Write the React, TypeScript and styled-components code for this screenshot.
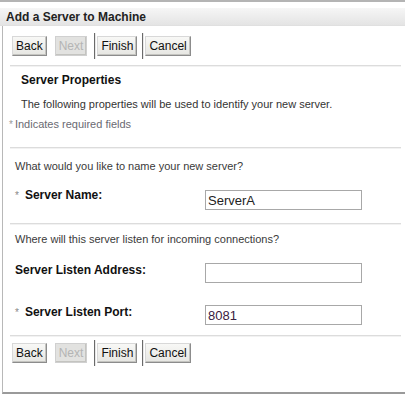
import styled, { createGlobalStyle } from "styled-components"

const GlobalStyle = createGlobalStyle`
    html, body {
        margin: 0;
        padding: 0;
        background: #ffffff;
    }
    body {
        font-family: "Liberation Sans", Arial, sans-serif;
        font-size: 11px;
        color: #333333;
    }
`

const Frame = styled.div`
    width: 405px;
    height: 394px;
    box-sizing: border-box;
    border-top: 2px solid #b4b4b4;
    padding-top: 6px;
    overflow: hidden;
`

const TitleBar = styled.div`
    height: 17px;
    display: flex;
    align-items: center;
    padding-left: 6px;
    background: linear-gradient(#f6f6f6, #e4e4e4);
    border-bottom: 1px solid #e0e0e0;
    font-size: 12px;
    font-weight: bold;
    color: #222222;
`

const Panel = styled.div`
    margin-left: 2px;
    height: 366px;
    border-left: 1px solid #b8b8b8;
    border-bottom: 2px solid #9a9a9a;
    display: flex;
    flex-direction: column;
`

const ButtonBar = styled.div<{ $top: number }>`
    display: flex;
    align-items: center;
    height: 26px;
    margin-top: ${(p) => p.$top}px;
    padding-left: 9px;
`

const Button = styled.button<{ $disabled?: boolean; $gap?: number }>`
    height: 20px;
    margin-left: ${(p) => p.$gap ?? 0}px;
    padding: 0 3px;
    font-family: "Liberation Sans", Arial, sans-serif;
    font-size: 12px;
    color: ${(p) => (p.$disabled ? "#b4b4b4" : "#111111")};
    background: ${(p) => (p.$disabled ? "#e2e2e0" : "linear-gradient(#f8f8f6, #e6e6e2)")};
    border: 1px solid;
    border-color: ${(p) => (p.$disabled ? "#d0d0d0" : "#d8d8d8 #8c8c8c #8c8c8c #d8d8d8")};
    box-shadow: inset -1px -1px 0 #c4c4c0;
    cursor: ${(p) => (p.$disabled ? "default" : "pointer")};
`

const Divider = styled.span<{ $gap: number }>`
    width: 1px;
    height: 26px;
    margin-left: ${(p) => p.$gap}px;
    margin-right: 1px;
    background: #6a6a6a;
    border-right: 1px solid #e8e8e8;
`

const Rule = styled.hr<{ $top: number }>`
    margin: ${(p) => p.$top}px 4px 0 7px;
    height: 0;
    border: none;
    border-top: 1px solid #dcdcdc;
    border-bottom: 1px solid #f2f2f2;
`

const Intro = styled.div`
    padding: 5px 0 0 18px;
`

const SectionTitle = styled.div`
    font-size: 12px;
    font-weight: bold;
    color: #111111;
    line-height: 16px;
`

const Text = styled.div<{ $top?: number }>`
    line-height: 16px;
    margin-top: ${(p) => p.$top ?? 0}px;
`

const Required = styled.div`
    margin: 4px 0 0 -12px;
    line-height: 16px;
    color: #6a6a72;
`

const Star = styled.span`
    font-size: 10px;
    color: #9a9a9a;
    margin-right: 2px;
`

const Question = styled.div<{ $top: number }>`
    margin-top: ${(p) => p.$top}px;
    padding-left: 12px;
    line-height: 16px;
    color: #3a3a3a;
`

const Row = styled.div<{ $top: number }>`
    display: flex;
    align-items: flex-start;
    margin-top: ${(p) => p.$top}px;
    padding-left: 12px;
`

const Label = styled.div`
    width: 190px;
    line-height: 16px;
    font-size: 12px;
    font-weight: bold;
    color: #111111;
`

const LabelStar = styled.span`
    font-size: 10px;
    font-weight: normal;
    color: #888888;
    margin-right: 6px;
`

const Input = styled.input<{ $top: number }>`
    box-sizing: border-box;
    width: 157px;
    height: 20px;
    margin: ${(p) => p.$top}px 0 0 0;
    padding: 1px 2px 0;
    border: 1px solid #a8a8a8;
    font-family: "Liberation Sans", Arial, sans-serif;
    font-size: 13px;
    color: #222222;
    outline: none;

    &.port {
        color: #3a2040;
    }
`

const Buttons = ({ top }: { top: number }) => (
    <ButtonBar $top={top}>
        <Button>Back</Button>
        <Button $disabled $gap={8}>Next</Button>
        <Divider $gap={7} />
        <Button>Finish</Button>
        <Divider $gap={5} />
        <Button>Cancel</Button>
    </ButtonBar>
)

const App = () => {
    return (
        <Frame>
            <GlobalStyle />
            <TitleBar>Add a Server to Machine</TitleBar>
            <Panel>
                <Buttons top={7} />
                <Rule $top={6} />
                <Intro>
                    <SectionTitle>Server Properties</SectionTitle>
                    <Text $top={8}>The following properties will be used to identify your new server.</Text>
                    <Required><Star>*</Star>Indicates required fields</Required>
                </Intro>
                <Rule $top={14} />
                <Question $top={9}>What would you like to name your new server?</Question>
                <Row $top={13}>
                    <Label><LabelStar>*</LabelStar>Server Name:</Label>
                    <Input $top={3} defaultValue="ServerA" />
                </Row>
                <Rule $top={13} />
                <Question $top={6}>Where will this server listen for incoming connections?</Question>
                <Row $top={15}>
                    <Label>Server Listen Address:</Label>
                    <Input $top={1} defaultValue="" />
                </Row>
                <Row $top={21}>
                    <Label><LabelStar>*</LabelStar>Server Listen Port:</Label>
                    <Input $top={1} className="port" defaultValue="8081" />
                </Row>
                <Rule $top={10} />
                <Buttons top={3} />
            </Panel>
        </Frame>
    )
}

export default App
